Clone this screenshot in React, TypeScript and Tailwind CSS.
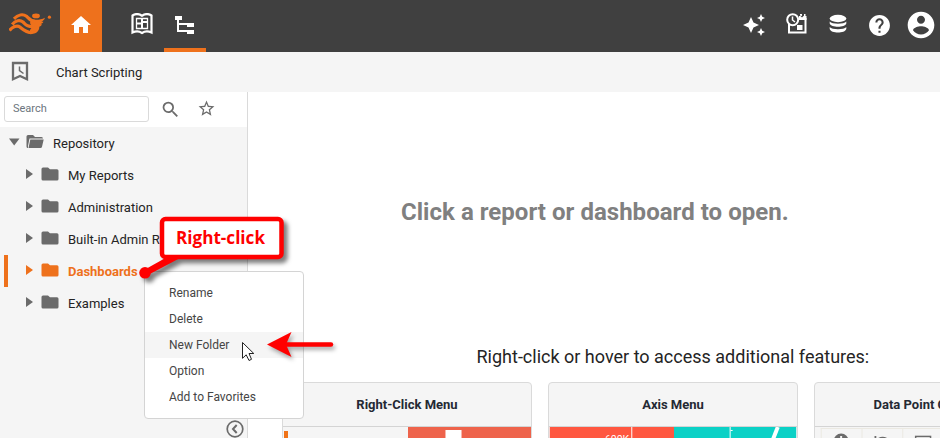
import React from "react";

const ROBOTO = "font-[Roboto,sans-serif]";

function Icon({ d, size = 24, className = "" }: { d: string; size?: number; className?: string }) {
  return (
    <svg width={size} height={size} viewBox="0 0 24 24" fill="currentColor" className={`block shrink-0 ${className}`}>
      <path fillRule="evenodd" d={d} />
    </svg>
  );
}

const HOME = "M10 20v-6h4v6h5v-8h3L12 3 2 12h3v8z";
const SEARCH =
  "M15.5 14h-.79l-.28-.27A6.47 6.47 0 0 0 16 9.5 6.5 6.5 0 1 0 9.5 16c1.61 0 3.09-.59 4.23-1.57l.27.28v.79l5 4.99L20.49 19l-4.99-5zm-6 0C7.01 14 5 11.99 5 9.5S7.01 5 9.5 5 14 7.01 14 9.5 11.99 14 9.5 14z";
const STAR =
  "M22 9.24l-7.19-.62L12 2 9.19 8.63 2 9.24l5.46 4.73L5.82 21 12 17.27 18.18 21l-1.63-7.03L22 9.24zM12 15.4l-3.76 2.27 1-4.28-3.32-2.88 4.38-.38L12 6.1l1.71 4.04 4.38.38-3.32 2.88 1 4.28L12 15.4z";
const HELP =
  "M12 2C6.48 2 2 6.48 2 12s4.48 10 10 10 10-4.48 10-10S17.52 2 12 2zm1 17h-2v-2h2v2zm2.07-7.75l-.9.92C13.45 12.9 13 13.5 13 15h-2v-.5c0-1.1.45-2.1 1.17-2.83l1.24-1.26c.37-.36.59-.86.59-1.41 0-1.1-.9-2-2-2s-2 .9-2 2H8c0-2.21 1.79-4 4-4s4 1.79 4 4c0 .88-.36 1.68-.93 2.25z";
const ACCOUNT =
  "M12 2C6.48 2 2 6.48 2 12s4.48 10 10 10 10-4.48 10-10S17.52 2 12 2zm0 3c1.66 0 3 1.34 3 3s-1.34 3-3 3-3-1.34-3-3 1.34-3 3-3zm0 14.2c-2.5 0-4.71-1.28-6-3.22.03-1.99 4-3.08 6-3.08 1.99 0 5.97 1.09 6 3.08-1.29 1.94-3.5 3.22-6 3.22z";
const SPARKLES =
  "M19 9l1.25-2.75L23 5l-2.75-1.25L19 1l-1.25 2.75L15 5l2.75 1.25L19 9zm-7.5.5L9 4 6.5 9.5 1 12l5.5 2.5L9 20l2.5-5.5L17 12l-5.5-2.5zM19 15l-1.25 2.75L15 19l2.75 1.25L19 23l1.25-2.75L23 19l-2.75-1.25L19 15z";

function Logo() {
  return (
    <svg width="44" height="24" viewBox="0 0 44 24" className="block" fill="#ee711c">
      <ellipse cx="27" cy="3.900" rx="3.900" ry="2.400" />
      <circle cx="40.400" cy="5.200" r="1.600" />
      <path d="M22 7.300C27.500 8.300 32 7.700 36 5.700C35.500 7.800 33.500 9 32.300 9.800H34.400C34 11.300 32.500 11.800 31.500 12.200H33C32.500 13.800 31 14.300 30.300 14.700C30.500 18.500 27.500 22.200 21 22.200L21 18L23 15L21 11Z" />
      <path
        d="M5 6.800C9 2.500 14 1.700 17.500 4.200C20 6.500 21.500 9.500 27 9.800M3.200 12.500C6.500 8.300 11 7.600 14 10C17 13 18 15 26 14.500M.5 18.500C3.500 14.500 8 13 11 15C14 17.500 16.500 20.500 23 20.500"
        fill="none"
        stroke="#ee711c"
        strokeWidth="3.200"
      />
    </svg>
  );
}

function BookIcon() {
  return (
    <svg width="22" height="22" viewBox="0 0 22 22" className="block" fill="none" stroke="white" strokeWidth="2.200">
      <path d="M1.500 2.500C4 .8 8 .8 11 2.700C14 .8 18 .8 20.500 2.500V19.500C17 18 14 18 11 20C8 18 5 18 1.500 19.500Z" />
      <path d="M11 5V16M5 10.500H11M11 9H17" strokeWidth="2" />
      <path d="M5.500 5.500H16.500V15.500H5.500Z" strokeWidth="1.300" />
    </svg>
  );
}

function TreeIcon() {
  return (
    <svg width="20" height="19" viewBox="0 0 20 19" className="block" fill="white">
      <path d="M0 0H7V4H4V7H12V9H4V14H12V16H2V4H0ZM12 7H19V11H12ZM12 14H19V18H12Z" />
    </svg>
  );
}

function ScheduleIcon() {
  return (
    <svg width="22" height="22" viewBox="0 0 22 22" className="block">
      <path d="M3 11V19.500H19.500V5" fill="none" stroke="white" strokeWidth="2" />
      <path d="M13 3H20.500V7H13Z M14 1H16V4H14Z M17.500 1H19.500V4H17.500Z M11 12H16.500V17H11Z" fill="white" />
      <path d="M14 2.500L16 4.500L18 2.500V1H16V3Z" fill="#404040" />
      <circle cx="6.700" cy="6.700" r="5.500" fill="#404040" stroke="white" strokeWidth="2" />
      <path d="M6.500 3.500V7L9 9" fill="none" stroke="white" strokeWidth="1.500" />
    </svg>
  );
}

function DatabaseIcon() {
  return (
    <svg width="18" height="20" viewBox="0 0 18 20" className="block" fill="white">
      <ellipse cx="9" cy="4.500" rx="8.300" ry="3.700" />
      <path d="M.7 7.500C3 10.500 15 10.500 17.300 7.500V9.500C16 13.800 2 13.800 .7 9.500Z" />
      <path d="M.7 13C3 16 15 16 17.300 13V15C16 19.800 2 19.800 .7 15Z" />
    </svg>
  );
}

function BookmarkIcon() {
  return (
    <svg width="18" height="21" viewBox="0 0 18 21" className="mb-0.5 block" fill="none" stroke="#6b6b6b" strokeWidth="2.300">
      <path d="M2 2H16V18.200L9 15L2 18.200Z" />
      <path d="M8.500 5.500V9.500L12.500 12.500" strokeWidth="1.500" />
    </svg>
  );
}

function FolderIcon({ open = false }: { open?: boolean }) {
  return open ? (
    <svg width="18" height="15" viewBox="0 0 18 15" className="block shrink-0" fill="currentColor">
      <path d="M2 1H7L9 3H15.500Q17 3 17 4.500H3.500L2 12V14Q.5 14 .5 12.500V2.500Q.5 1 2 1ZM4.300 5.500H17.700L16 12.800Q15.700 14 14.500 14H2.500Z" />
    </svg>
  ) : (
    <svg width="18" height="15" viewBox="0 0 18 15" className="block shrink-0" fill="currentColor">
      <path d="M2 .5H7L9 2.300H16Q17.500 2.300 17.500 3.800V12Q17.500 13.500 16 13.500H2Q.5 13.500 .5 12V2Q.5 .5 2 .5Z" />
    </svg>
  );
}

function TreeRow({ label, active = false }: { label: string; active?: boolean }) {
  return (
    <div
      className={`flex h-8 items-center border-l-4 ${
        active ? "border-[#ee711c] font-bold text-[#ee711c]" : "border-transparent text-[#6b6b6b]"
      }`}
    >
      <svg width="7" height="10" viewBox="0 0 7 10" className="mb-0.5 ml-[18px] block" fill="currentColor">
        <path d="M0 0L7 5L0 10Z" />
      </svg>
      <span className="mb-0.5 ml-2">
        <FolderIcon />
      </span>
      <span className={`ml-[9px] pt-0.5 text-[13px] whitespace-nowrap ${active ? "" : "text-[#242424]"}`}>
        {label}
      </span>
    </div>
  );
}

function Header() {
  return (
    <header className="flex h-[52px] shrink-0 bg-[#404040] text-white">
      <div className="flex w-[60px] items-center pb-1 pl-[9px]">
        <Logo />
      </div>
      <div className="flex w-[42px] items-center justify-center bg-[#ee711c] pb-0.5">
        <Icon d={HOME} size={24} />
      </div>
      <div className="ml-[19px] flex w-[42px] items-center justify-center pb-1">
        <BookIcon />
      </div>
      <div className="ml-px flex w-[42px] justify-center border-b-4 border-[#ee711c] pt-4">
        <TreeIcon />
      </div>
      <div className="ml-auto flex items-center pr-[3px]">
        <Icon d={SPARKLES} className="mb-0.5" />
        <span className="ml-[20px] pb-1"><ScheduleIcon /></span>
        <span className="ml-[21px] pb-1"><DatabaseIcon /></span>
        <Icon d={HELP} className="mb-0.5 ml-[20px]" size={25} />
        <Icon d={ACCOUNT} size={32} className="mb-0.5 ml-[13px]" />
      </div>
    </header>
  );
}

function Sidebar() {
  return (
    <aside className="flex w-[248px] shrink-0 flex-col border-r border-[#dadada] bg-[#f5f5f5] text-[#6b6b6b]">
      <div className="flex h-[35px] shrink-0 items-start bg-white pt-1 pl-1">
        <div className="flex h-[26px] w-[145px] items-center rounded-[3px] border border-[#dadada] pl-2 text-[11px] text-[#6c757d]">
          Search
        </div>
        <Icon d={SEARCH} size={21} className="mt-[3px] ml-[11px]" />
        <Icon d={STAR} size={19} className="mt-[3px] ml-[16px]" />
      </div>
      <div className="flex h-8 items-center pl-[9px]">
        <svg width="11" height="8" viewBox="0 0 11 8" className="mb-0.5 block" fill="currentColor">
          <path d="M0 .5H10.500L5.200 7.500Z" />
        </svg>
        <span className="mb-1 ml-[6px]"><FolderIcon open /></span>
        <span className="ml-[9px] pt-0.5 text-[13px] text-[#242424]">Repository</span>
      </div>
      <RepositoryTree />
      <div className="mt-auto flex justify-end pr-[3px]">
        <svg width="18" height="18" viewBox="0 0 18 18" className="block" fill="none" stroke="#6b6b6b" strokeWidth="1.700">
          <circle cx="9" cy="9" r="7.800" />
          <path d="M10.700 5L7 9L10.700 13" strokeWidth="2" />
        </svg>
      </div>
    </aside>
  );
}

function RepositoryTree() {
  return (
    <div className="ml-1">
      <TreeRow label="My Reports" />
      <TreeRow label="Administration" />
      <TreeRow label="Built-in Admin Reports" />
      <TreeRow label="Dashboards" active />
      <TreeRow label="Examples" />
    </div>
  );
}

function Card({ title, titleClass = "", children }: { title: string; titleClass?: string; children: React.ReactNode }) {
  return (
    <section className="flex h-[200px] w-[250px] shrink-0 flex-col overflow-hidden rounded-[4px] border border-[#dadada] bg-[#f5f5f5]">
      <h3
        className={`flex h-11 shrink-0 items-center justify-center border-b border-[#d4d4d4] text-[13px] font-bold whitespace-nowrap text-[#242933] ${titleClass}`}
      >
        {title}
      </h3>
      {children}
    </section>
  );
}

function Cards() {
  return (
    <div className="flex gap-4 pl-[34px]">
      <Card title="Right-Click Menu">
        <div className="flex flex-1">
          <div className="mt-1 ml-px w-1 bg-[#f07318]" />
          <div className="ml-auto flex w-[123px] bg-[#ee634b] pt-[3px] pl-[37px]">
            <div className="w-[17px] border-x border-[#f7b5a9] bg-white" />
          </div>
        </div>
      </Card>
      <Card title="Axis Menu">
        <svg width="248" height="155" viewBox="0 0 248 155" className="block">
          <rect width="125" height="155" fill="#ff5740" />
          <rect x="125" width="123" height="155" fill="#0bd1c6" />
          <path d="M82.500 0V155M181.500 0V155M182 3.500H184" stroke="white" />
          <path d="M229.500 0L224 14" stroke="white" strokeWidth="4" />
          <text x="55.500" y="16" fontSize="10.500" fill="white" className="font-[Roboto,sans-serif]">600K</text>
        </svg>
      </Card>
      <Card title="Data Point Comparison" titleClass="pl-1">
        <svg width="248" height="155" viewBox="0 0 248 155" className="block" fill="none" stroke="#6b6b6b">
          <path d="M5.500 1V155M46.500 1V155M87.500 1V155M5 1.500H248" stroke="#ebe9e2" />
          <circle cx="25.500" cy="14" r="7.500" fill="#6b6b6b" stroke="none" />
          <path d="M25.500 9V15" stroke="#f5f5f5" strokeWidth="2" />
          <path d="M60 9V15H66M60 15Q66 7.500 73 13" strokeWidth="1.800" />
          <rect x="100.500" y="9.500" width="15" height="12" strokeWidth="1.500" />
        </svg>
      </Card>
    </div>
  );
}

function ContextMenu() {
  const items = ["Rename", "Delete", "New Folder", "Option", "Add to Favorites"];
  return (
    <div className="absolute top-[271px] left-[144px] h-[148px] w-[160px] rounded-[4px] border border-[#d4d4d4] bg-white pt-2 text-[12px] text-[#454545]">
      {items.map((item) => (
        <div key={item} className={`flex h-[26px] items-center pl-6 ${item === "New Folder" ? "bg-[#f5f5f5]" : ""}`}>
          {item}
        </div>
      ))}
    </div>
  );
}

function Annotations() {
  return (
    <svg width="200" height="160" viewBox="140 205 200 160" className="absolute top-[205px] left-[140px] overflow-visible">
      <g className="drop-shadow-[4px_4px_2px_rgba(0,0,0,0.5)]">
        <path d="M169 256L182 257L148 275L144 270Z" fill="#f00" />
        <circle cx="145" cy="272.800" r="5.800" fill="#f00" />
        <rect x="162" y="219" width="119.500" height="38" rx="3.500" fill="white" stroke="#f00" strokeWidth="4.500" />
      </g>
      <text x="176" y="244" textLength="89" lengthAdjust="spacingAndGlyphs" fontSize="18" fontWeight="700" fill="#f00" className="font-['Open_Sans',sans-serif]">
        Right-click
      </text>
      <g className="drop-shadow-[2px_3px_2px_rgba(0,0,0,0.35)]">
        <path d="M286 344.500H331" stroke="#f00" strokeWidth="4.500" strokeLinecap="round" />
        <path d="M267 344.500L291.500 332L286 344.500L291.500 357Z" fill="#f00" />
      </g>
      <path d="M242.500 342.500V358.300L246.200 354.800L249 360.500L251.500 359.300L249 353.500H253.800Z" fill="white" stroke="#222" />
    </svg>
  );
}

export default function App() {
  return (
    <div className={`relative flex h-[438px] w-[940px] flex-col overflow-hidden bg-white ${ROBOTO}`}>
      <Header />
      <div className="flex h-10 shrink-0 items-center bg-[#f5f5f5] pl-[11px]">
        <BookmarkIcon />
        <span className="ml-[27px] pt-0.5 text-[13px] text-[#242424]">Chart Scripting</span>
      </div>
      <div className="flex min-h-0 flex-1">
        <Sidebar />
        <main className="flex w-[692px] flex-col overflow-hidden">
          <h1 className="mt-[102px] ml-[153px] text-[24px] leading-9 font-bold tracking-[0.03px] whitespace-nowrap text-[#808080]">
            Click a report or dashboard to open.
          </h1>
          <h2 className="mt-[113px] ml-[228.500px] text-[18px] leading-7 whitespace-nowrap text-[#242424]">
            Right-click or hover to access additional features:
          </h2>
          <div className="mt-[11px]"><Cards /></div>
        </main>
      </div>
      <ContextMenu />
      <Annotations />
    </div>
  );
}
